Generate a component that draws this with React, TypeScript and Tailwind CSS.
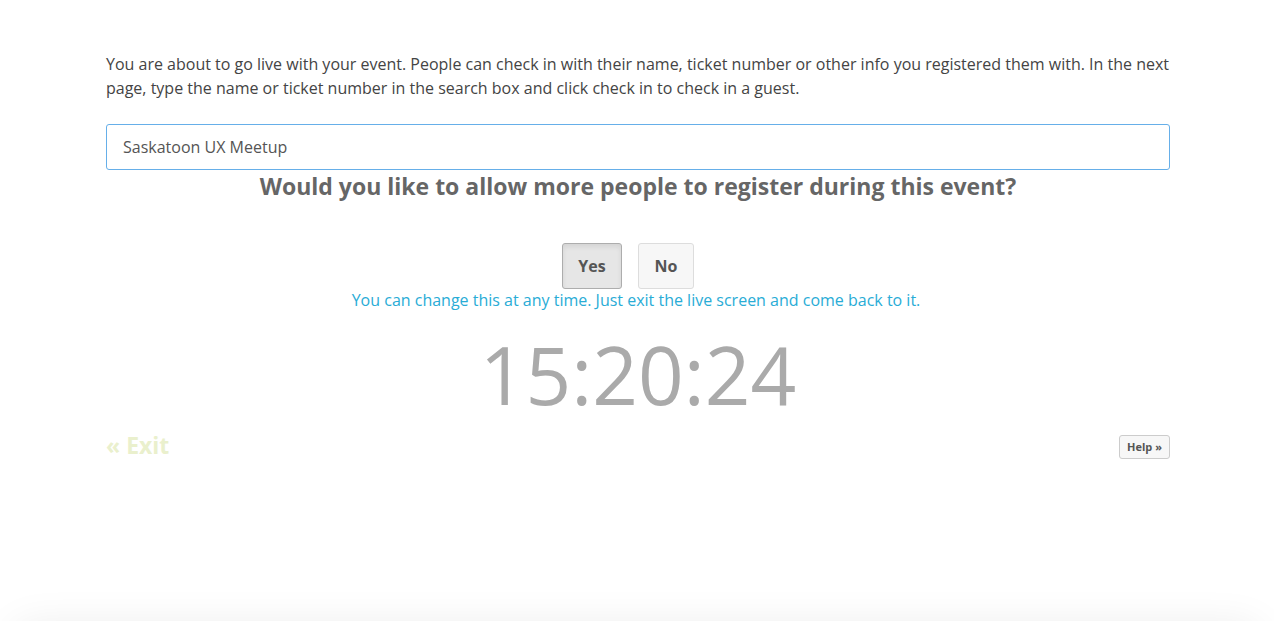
export default function App() {
  return (
    <div className="h-[621px] bg-white overflow-hidden font-['Open_Sans',sans-serif] text-[#555]">
      <div className="ml-[106px] w-[1064px] pt-[52px]">
        <p className="text-base leading-6 text-[#444]">
          You are about to go live with your event. People can check in with their name, ticket number or other info
          you registered them with. In the next page, type the name or ticket number in the search box and click check
          in to check in a guest.
        </p>

        <input
          className="mt-6 block w-full h-[46px] px-4 text-base text-[#555] border border-[#66afe9] rounded-[3px] outline-none"
          defaultValue="Saskatoon UX Meetup"
        />

        <h2 className="text-center text-[23px] leading-8 font-bold text-[#666]">
          Would you like to allow more people to register during this event?
        </h2>

        <div className="mt-[41px] pr-5 flex justify-center gap-4">
          <button className="w-[60px] h-[46px] rounded-[3px] border border-[#adadad] bg-[#e6e6e6] text-base font-bold text-[#555] shadow-[inset_0_3px_5px_rgba(0,0,0,0.08)]">
            Yes
          </button>
          <button className="w-[56px] h-[46px] rounded-[3px] border border-[#ddd] bg-[#f7f7f7] text-base font-bold text-[#555]">
            No
          </button>
        </div>

        <p className="pr-1 text-center text-base leading-[22px] text-[#29acd6]">
          You can change this at any time. Just exit the live screen and come back to it.
        </p>

        <div className="mt-[19px] text-center text-[80px] leading-[88px] text-[#aaa]">15:20:24</div>

        <div className="mt-[13px] flex items-center justify-between">
          <a className="text-[23px] leading-7 font-bold text-[#eaf0cd]">« Exit</a>
          <button className="mt-1 h-6 w-[51px] rounded-[3px] border border-[#ccc] bg-[#f7f7f7] text-[11px] font-bold text-[#555]">
            Help »
          </button>
        </div>
      </div>

      <div className="mx-[12px] mt-[166px] h-10 rounded-[40px] bg-white shadow-[0_0_40px_rgba(0,0,0,0.08)]" />
    </div>
  )
}
